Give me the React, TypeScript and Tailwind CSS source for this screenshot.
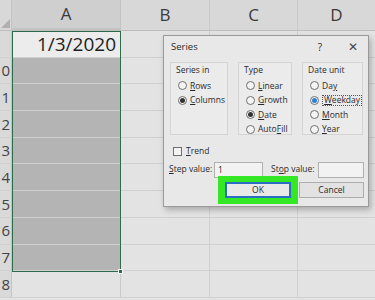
import React from 'react'

const rowLabels = ['9', '0', '1', '2', '3', '4', '5', '6', '7', '8']

function Radio({ label, u, checked = false, blue = false, focus = false }: { label: string, u: number, checked?: boolean, blue?: boolean, focus?: boolean }) {
  return (
    <div className="flex items-center gap-[3px] h-[14.5px]">
      <span className="w-[9px] h-[9px] rounded-full border border-[#6f6f6f] bg-[#f4f4f4] flex items-center justify-center shrink-0">
        {checked && <span className={`w-[5px] h-[5px] rounded-full ${blue ? 'bg-[#2f7fd6]' : 'bg-[#333]'}`} />}
      </span>
      <span className={`leading-none ${focus ? 'border border-dotted border-[#555] px-px' : ''}`}>
        {label.slice(0, u)}<span className="underline">{label[u]}</span>{label.slice(u + 1)}
      </span>
    </div>
  )
}

function Group({ title, children, w }: { title: string, children: React.ReactNode, w: string }) {
  return (
    <div className={`${w} h-[73px] border border-[#d4d4d4] bg-[#ebebeb] pl-[5px] pt-[3px]`}>
      <div className="leading-none mb-[4px]">{title}</div>
      <div className="pl-[2px]">{children}</div>
    </div>
  )
}

export default function App() {
  return (
    <div className="relative w-[375px] h-[300px] overflow-hidden bg-[#e3e3e3]" style={{ fontFamily: '"Open Sans", "Noto Sans", sans-serif' }}>
      {/* header row */}
      <div className="flex h-[31px] bg-[#d8d8d8] border-b border-[#bdbdbd] text-[#3a3a3a] text-[17px]">
        <div className="w-[12px] relative border-r border-[#c4c4c4]">
          <div className="absolute right-[1px] bottom-[2px] w-0 h-0 border-l-[9px] border-l-transparent border-b-[9px] border-b-[#b0b0b0]" />
        </div>
        <div className="w-[109px] flex items-center justify-center bg-[#cfcfcf] border-b-2 border-[#3d8a5f] border-r border-[#c4c4c4]">A</div>
        <div className="w-[89px] flex items-center justify-center border-r border-[#c9c9c9]">B</div>
        <div className="w-[88px] flex items-center justify-center border-r border-[#c9c9c9]">C</div>
        <div className="flex-1 flex items-center justify-center">D</div>
      </div>

      {/* rows */}
      {rowLabels.map((lbl, i) => (
        <div key={i} className="flex h-[26.7px] border-b border-[#d0d0d0]">
          <div className="w-[12px] overflow-hidden flex justify-end items-center bg-[#d9d9d9] border-r border-[#c4c4c4] text-[15px] text-[#444]">
            <span className={`mr-[1px] ${i === 0 ? 'invisible' : ''}`}>{lbl}</span>
          </div>
          <div className={`w-[109px] border-r border-[#c9c9c9] flex items-center justify-end pr-[4px] text-[19px] text-[#1e1e1e] ${i === 0 ? 'bg-[#ececec]' : i < 9 ? 'bg-[#b4b4b4] border-[#a9a9a9]' : 'bg-[#e3e3e3]'}`}>
            {i === 0 ? '1/3/2020' : ''}
          </div>
          <div className="w-[89px] border-r border-[#d0d0d0]" />
          <div className="w-[88px] border-r border-[#d0d0d0]" />
          <div className="flex-1" />
        </div>
      ))}

      {/* selection outline */}
      <div className="absolute left-[12px] top-[31px] w-[109px] h-[241px] border border-[#2e6b4a]">
        <div className="absolute -right-[3px] -bottom-[3px] w-[5px] h-[5px] bg-[#2e6b4a] border border-white" />
      </div>

      {/* Series dialog */}
      <div className="absolute left-[163px] top-[35px] w-[206px] h-[172px] bg-[#e8e8e8] border border-[#9a9a9a] shadow-[2px_3px_6px_rgba(0,0,0,0.25)] text-[8.5px] text-[#2a2a2a]">
        <div className="flex items-center h-[22px] pl-[7px] pr-[10px] text-[9.5px]">
          <span>Series</span>
          <span className="ml-auto mr-[26px] text-[10px]">?</span>
          <span className="text-[12px] leading-none text-[#444]">✕</span>
        </div>
        <div className="flex gap-[10px] pl-[6px] mt-[4px]">
          <Group title="Series in" w="w-[58px]">
            <Radio label="Rows" u={0} />
            <Radio label="Columns" u={0} checked />
          </Group>
          <Group title="Type" w="w-[54px]">
            <Radio label="Linear" u={0} />
            <Radio label="Growth" u={0} />
            <Radio label="Date" u={0} checked />
            <Radio label="AutoFill" u={4} />
          </Group>
          <Group title="Date unit" w="w-[61px]">
            <Radio label="Day" u={2} />
            <Radio label="Weekday" u={0} checked blue focus />
            <Radio label="Month" u={0} />
            <Radio label="Year" u={0} />
          </Group>
        </div>
        <div className="flex items-center gap-[4px] pl-[9px] mt-[11px] h-[10px]">
          <span className="w-[9px] h-[9px] border border-[#6f6f6f] bg-[#f4f4f4]" />
          <span><span className="underline">T</span>rend</span>
        </div>
        <div className="flex items-center pl-[5px] mt-[5px] h-[17px]">
          <span className="w-[45px]"><span className="underline">S</span>tep value:</span>
          <div className="w-[49px] h-[16px] border border-[#b0b0b0] bg-[#f2f2f2] pl-[3px] leading-[14px]">1</div>
          <span className="ml-[8px] w-[47px]">St<span className="underline">o</span>p value:</span>
          <div className="w-[46px] h-[16px] border border-[#b0b0b0] bg-[#f2f2f2]" />
        </div>
        <div className="flex items-center pl-[54px] mt-[-2px]">
          <div className="w-[80px] h-[28px] bg-[#35e825] flex items-center justify-center">
            <div className="w-[66px] h-[16px] border-2 border-[#2b6fc2] bg-[#e9e9e9] flex items-center justify-center">OK</div>
          </div>
          <div className="ml-[1px] w-[65px] h-[16px] border border-[#adadad] bg-[#e2e2e2] flex items-center justify-center">Cancel</div>
        </div>
      </div>
    </div>
  )
}
